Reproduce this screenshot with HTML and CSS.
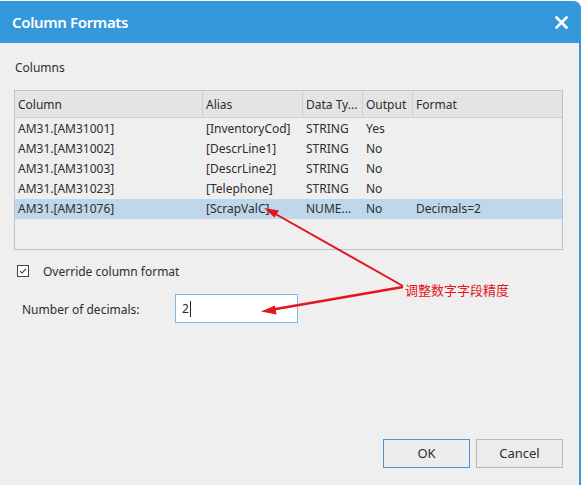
FILE: index.html
```html
<!DOCTYPE html>
<html>
<head>
<meta charset="utf-8">
<link rel="stylesheet" href="styles.css">
</head>
<body>
<div class="dialog">
  <div class="titlebar">
    <span class="title">Column Formats</span>
    <svg class="close" width="13" height="13" viewBox="0 0 13 13"><path d="M1.5 1.5L11.5 11.5M11.5 1.5L1.5 11.5" stroke="#fff" stroke-width="2.6" stroke-linecap="square"/></svg>
  </div>
  <div class="body">
    <div class="section-label">Columns</div>
    <div class="grid">
      <div class="row head">
        <div class="c c1">Column</div>
        <div class="c c2">Alias</div>
        <div class="c c3">Data Ty...</div>
        <div class="c c4">Output</div>
        <div class="c c5">Format</div>
      </div>
      <div class="row">
        <div class="c c1">AM31.[AM31001]</div>
        <div class="c c2">[InventoryCod]</div>
        <div class="c c3">STRING</div>
        <div class="c c4">Yes</div>
        <div class="c c5"></div>
      </div>
      <div class="row">
        <div class="c c1">AM31.[AM31002]</div>
        <div class="c c2">[DescrLine1]</div>
        <div class="c c3">STRING</div>
        <div class="c c4">No</div>
        <div class="c c5"></div>
      </div>
      <div class="row">
        <div class="c c1">AM31.[AM31003]</div>
        <div class="c c2">[DescrLine2]</div>
        <div class="c c3">STRING</div>
        <div class="c c4">No</div>
        <div class="c c5"></div>
      </div>
      <div class="row">
        <div class="c c1">AM31.[AM31023]</div>
        <div class="c c2">[Telephone]</div>
        <div class="c c3">STRING</div>
        <div class="c c4">No</div>
        <div class="c c5"></div>
      </div>
      <div class="row selected">
        <div class="c c1">AM31.[AM31076]</div>
        <div class="c c2">[ScrapValC]</div>
        <div class="c c3">NUME...</div>
        <div class="c c4">No</div>
        <div class="c c5">Decimals=2</div>
      </div>
    </div>
    <div class="check-row">
      <span class="checkbox"><svg width="12" height="12" viewBox="0 0 12 12"><path d="M2.5 6.2L4.8 8.5L9.5 3.5" fill="none" stroke="#333" stroke-width="1.3"/></svg></span>
      <span class="check-label">Override column format</span>
    </div>
    <div class="field-row">
      <span class="field-label">Number of decimals:</span>
      <div class="input"><span>2</span><span class="caret"></span></div>
    </div>
    <div class="spacer"></div>
    <div class="buttons">
      <div class="btn primary">OK</div>
      <div class="btn">Cancel</div>
    </div>
  </div>
  <div class="note">调整数字字段精度</div>
  <svg class="arrows" width="584" height="485" viewBox="0 0 584 485">
    <path d="M403 286L272 212" stroke="#e3141b" stroke-width="2" fill="none"/>
    <path d="M264 208L279 210.5L274.5 217.5Z" fill="#e3141b"/>
    <path d="M403 287L270 310" stroke="#e3141b" stroke-width="2.4" fill="none"/>
    <path d="M261 311.5L275 305.5L276.5 314.5Z" fill="#e3141b"/>
  </svg>
</div>
</body>
</html>
```

FILE: styles.css
```css
html, body {
  margin: 0;
  padding: 0;
  background: #fdfdfd;
}
body {
  font-family: "Noto Sans", "Open Sans", sans-serif;
  font-size: 12px;
  color: #2e2e2e;
}
.dialog {
  position: relative;
  width: 579px;
  height: 484px;
  margin-top: 1px;
  border-right: 2px solid #3a96d8;
  background: #efefef;
  display: flex;
  flex-direction: column;
  border-top-right-radius: 8px;
}
.titlebar {
  height: 42px;
  background: #3498db;
  border-top-right-radius: 8px;
  display: flex;
  align-items: center;
  justify-content: space-between;
  padding: 0 13px 0 12px;
  margin-right: -2px;
}
.title {
  color: #fff;
  font-size: 15px;
  font-weight: 600;
  letter-spacing: -0.35px;
}
.close {
  display: block;
}
.body {
  flex: 1;
  display: flex;
  flex-direction: column;
  padding: 16px 16px 17px 14px;
}
.section-label {
  padding-left: 1px;
  line-height: 17px;
  height: 17px;
}
.grid {
  margin-top: 14px;
  width: 547px;
  height: 158px;
  border: 1px solid #b9c4cf;
  background: #efefef;
}
.row {
  display: flex;
  height: 20px;
  line-height: 20px;
  white-space: nowrap;
}
.row.head {
  height: 26px;
  line-height: 27px;
  background: #e4e4e4;
  border-bottom: 1px solid #d2d2d2;
  margin-bottom: 1px;
}
.row.head .c {
  border-right: 1px solid #d0d0d0;
}
.row.head .c5 {
  border-right: none;
}
.row.selected {
  background: #bfd7ea;
}
.c {
  padding-left: 3px;
  overflow: hidden;
  box-sizing: border-box;
}
.c1 { width: 188px; }
.c2 { width: 100px; }
.c3 { width: 60px; }
.c4 { width: 50px; }
.c5 { flex: 1; }
.check-row {
  display: flex;
  align-items: center;
  margin-top: 14px;
  padding-left: 3px;
  height: 14px;
}
.checkbox {
  width: 10px;
  height: 10px;
  border: 1px solid #444;
  background: #fff;
  display: flex;
  align-items: center;
  justify-content: center;
}
.checkbox svg { display: block; }
.check-label {
  margin-left: 14px;
}
.field-row {
  display: flex;
  align-items: center;
  margin-top: 16px;
  padding-left: 8px;
}
.field-label {
  width: 153px;
  padding-top: 1px;
}
.input {
  height: 27px;
  border: 1px solid #87b6e0;
  background: #fff;
  display: flex;
  align-items: center;
  padding-left: 6px;
  box-sizing: content-box;
  width: 115px;
}
.caret {
  display: inline-block;
  width: 1px;
  height: 16px;
  background: #222;
  margin-left: 1px;
}
.spacer { flex: 1; }
.buttons {
  display: flex;
  justify-content: flex-end;
  gap: 6px;
}
.btn {
  width: 85px;
  height: 27px;
  line-height: 27px;
  text-align: center;
  border: 1px solid #b8b8b8;
  background: #ececec;
  font-size: 13px;
}
.btn.primary {
  border-color: #4e94d2;
}
.note {
  position: absolute;
  left: 405px;
  top: 280px;
  color: #e3141b;
  font-family: "Noto Sans CJK SC", sans-serif;
  font-size: 13px;
  line-height: 18px;
}
.arrows {
  position: absolute;
  left: 0;
  top: -1px;
  pointer-events: none;
}
```
